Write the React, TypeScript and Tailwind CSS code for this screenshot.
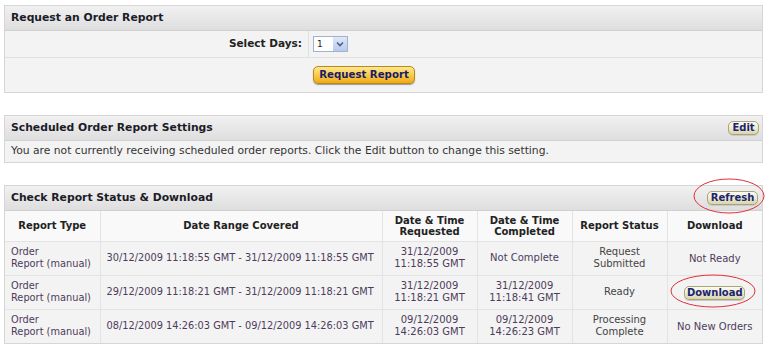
import React from "react";

const font = { fontFamily: '"DejaVu Sans", Verdana, sans-serif' };

function BeigeBtn({ children, className = "" }: { children: React.ReactNode; className?: string }) {
  return (
    <span
      className={`inline-flex items-center justify-center rounded-[5px] border border-[#a9a57a] bg-gradient-to-b from-[#fbfaf0] via-[#eeecd2] to-[#d8d4ae] text-[10px] font-bold text-[#1b2470] leading-none shadow-[0_1px_0_#c9c9c9] ${className}`}
    >
      {children}
    </span>
  );
}

function PanelHeader({ title, right }: { title: string; right?: React.ReactNode }) {
  return (
    <div className="flex h-[25px] items-center justify-between border-b border-[#d0d0d0] bg-gradient-to-b from-[#f1f1f1] to-[#dedede] pl-[6px] pr-[3px]">
      <span className="text-[10.8px] font-bold text-[#1c1c28]">{title}</span>
      {right}
    </div>
  );
}

const rows = [
  {
    range: "30/12/2009 11:18:55 GMT - 31/12/2009 11:18:55 GMT",
    req: ["31/12/2009", "11:18:55 GMT"],
    comp: ["Not Complete"],
    status: ["Request", "Submitted"],
    dl: "Not Ready",
  },
  {
    range: "29/12/2009 11:18:21 GMT - 31/12/2009 11:18:21 GMT",
    req: ["31/12/2009", "11:18:21 GMT"],
    comp: ["31/12/2009", "11:18:41 GMT"],
    status: ["Ready"],
    dl: "button",
  },
  {
    range: "08/12/2009 14:26:03 GMT - 09/12/2009 14:26:03 GMT",
    req: ["09/12/2009", "14:26:03 GMT"],
    comp: ["09/12/2009", "14:26:23 GMT"],
    status: ["Processing", "Complete"],
    dl: "No New Orders",
  },
];

function Lines({ lines }: { lines: string[] }) {
  return (
    <>
      {lines.map((l, i) => (
        <div key={i}>{l}</div>
      ))}
    </>
  );
}

export default function App() {
  return (
    <div className="relative h-[346px] w-[768px] overflow-hidden bg-white pt-[5px] pl-[4px]" style={font}>
      <div className="flex w-[759px] flex-col gap-[22px]">
        {/* Panel 1 */}
        <div className="border border-[#d6d6d6] bg-[#f3f3f3]">
          <PanelHeader title="Request an Order Report" />
          <div className="flex h-[27px] items-stretch border-b border-[#e0e0e0]">
            <div className="flex w-[304px] items-center justify-end border-r border-[#e0e0e0] pr-[6px] text-[10.5px] font-bold text-[#222]">
              Select Days:
            </div>
            <div className="flex items-center pl-[4px]">
              <div className="flex h-[16px] w-[35px] items-stretch border border-[#9fb3cf] bg-white">
                <span className="flex-1 pl-[3px] text-[9px] leading-[14px] text-[#222]">1</span>
                <span className="flex w-[14px] items-center justify-center bg-gradient-to-b from-[#dfe8f8] to-[#b7c9ec]">
                  <svg width="8" height="6" viewBox="0 0 8 6">
                    <path d="M1 1.5 L4 4.5 L7 1.5" fill="none" stroke="#4d6185" strokeWidth="1.6" />
                  </svg>
                </span>
              </div>
            </div>
          </div>
          <div className="flex h-[34px] items-center pl-[308px]">
            <span className="inline-flex h-[18px] w-[102px] items-center justify-center rounded-[5px] border border-[#b7891e] bg-gradient-to-b from-[#fde88c] via-[#f8cc48] to-[#eeaa10] text-[10.2px] font-bold text-[#1a1a6a] shadow-[0_1px_1px_#999]">
              Request Report
            </span>
          </div>
        </div>

        {/* Panel 2 */}
        <div className="border border-[#d6d6d6] bg-[#f3f3f3]">
          <PanelHeader
            title="Scheduled Order Report Settings"
            right={<BeigeBtn className="h-[14px] w-[31px]">Edit</BeigeBtn>}
          />
          <div className="flex h-[21px] items-center pl-[6px] text-[10.75px] text-[#333]">
            You are not currently receiving scheduled order reports. Click the Edit button to change this setting.
          </div>
        </div>

        {/* Panel 3 */}
        <div className="border border-[#d6d6d6] bg-[#f3f3f3]">
          <PanelHeader
            title="Check Report Status & Download"
            right={<BeigeBtn className="mr-[1px] h-[14px] w-[51px]">Refresh</BeigeBtn>}
          />
          <table className="w-full table-fixed border-collapse text-[10px]">
            <colgroup>
              <col className="w-[95px]" />
              <col className="w-[282px]" />
              <col className="w-[95px]" />
              <col className="w-[95px]" />
              <col className="w-[95px]" />
              <col />
            </colgroup>
            <thead>
              <tr className="h-[30px] bg-[#f9f9f9] font-bold text-[#222]">
                <th className="border-r border-[#e3e3e3] text-center font-bold">Report Type</th>
                <th className="border-r border-[#e3e3e3] text-center font-bold">Date Range Covered</th>
                <th className="border-r border-[#e3e3e3] text-center font-bold leading-[11px]">
                  Date &amp; Time
                  <br />
                  Requested
                </th>
                <th className="border-r border-[#e3e3e3] text-center font-bold leading-[11px]">
                  Date &amp; Time
                  <br />
                  Completed
                </th>
                <th className="border-r border-[#e3e3e3] text-center font-bold">Report Status</th>
                <th className="text-center font-bold">Download</th>
              </tr>
            </thead>
            <tbody>
              {rows.map((r, i) => (
                <tr key={i} className="h-[34px] border-t border-[#e3e3e3] text-[#4e3b5c]">
                  <td className="border-r border-[#e3e3e3] pl-[6px] text-[9.8px] leading-[12px]">
                    Order
                    <br />
                    Report (manual)
                  </td>
                  <td className="border-r border-[#e3e3e3] pl-[6px] text-[9.8px]">{r.range}</td>
                  <td className="border-r border-[#e3e3e3] text-center leading-[12px]">
                    <Lines lines={r.req} />
                  </td>
                  <td className="border-r border-[#e3e3e3] text-center leading-[12px]">
                    <Lines lines={r.comp} />
                  </td>
                  <td className="border-r border-[#e3e3e3] text-center leading-[12px] text-[#444]">
                    <Lines lines={r.status} />
                  </td>
                  <td className="text-center">
                    {r.dl === "button" ? (
                      <BeigeBtn className="h-[14px] w-[61px]">Download</BeigeBtn>
                    ) : (
                      r.dl
                    )}
                  </td>
                </tr>
              ))}
            </tbody>
          </table>
        </div>
      </div>

      {/* red annotation ellipses */}
      <svg className="pointer-events-none absolute left-0 top-0" width="768" height="346">
        <ellipse cx="729" cy="196" rx="35" ry="17" fill="none" stroke="#e0303a" strokeWidth="1" />
        <ellipse cx="713" cy="291" rx="42" ry="16" fill="none" stroke="#e0303a" strokeWidth="1" />
      </svg>
    </div>
  );
}
